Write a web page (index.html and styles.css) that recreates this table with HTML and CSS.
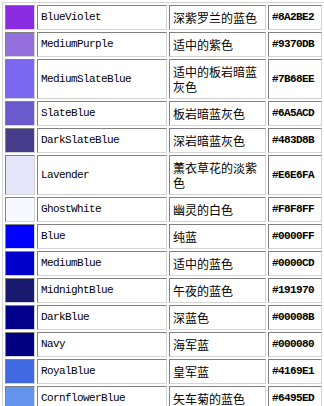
FILE: index.html
```html
<!DOCTYPE html>
<html lang="zh">
<head>
<meta charset="utf-8">
<title>蓝紫色系颜色表</title>
<link rel="stylesheet" href="styles.css">
</head>
<body>
<table class="colors">
  <colgroup>
    <col class="c-swatch"><col class="c-name"><col class="c-cn"><col class="c-hex">
  </colgroup>
  <tr><td class="swatch" style="background:#8A2BE2"></td><td class="name">BlueViolet</td><td class="cn">深紫罗兰的蓝色</td><td class="hex">#8A2BE2</td></tr>
  <tr><td class="swatch" style="background:#9370DB"></td><td class="name">MediumPurple</td><td class="cn">适中的紫色</td><td class="hex">#9370DB</td></tr>
  <tr><td class="swatch" style="background:#7B68EE"></td><td class="name">MediumSlateBlue</td><td class="cn">适中的板岩暗蓝灰色</td><td class="hex">#7B68EE</td></tr>
  <tr><td class="swatch" style="background:#6A5ACD"></td><td class="name">SlateBlue</td><td class="cn">板岩暗蓝灰色</td><td class="hex">#6A5ACD</td></tr>
  <tr><td class="swatch" style="background:#483D8B"></td><td class="name">DarkSlateBlue</td><td class="cn">深岩暗蓝灰色</td><td class="hex">#483D8B</td></tr>
  <tr><td class="swatch" style="background:#E6E6FA"></td><td class="name">Lavender</td><td class="cn">薰衣草花的淡紫色</td><td class="hex">#E6E6FA</td></tr>
  <tr><td class="swatch" style="background:#F8F8FF"></td><td class="name">GhostWhite</td><td class="cn">幽灵的白色</td><td class="hex">#F8F8FF</td></tr>
  <tr><td class="swatch" style="background:#0000FF"></td><td class="name">Blue</td><td class="cn">纯蓝</td><td class="hex">#0000FF</td></tr>
  <tr><td class="swatch" style="background:#0000CD"></td><td class="name">MediumBlue</td><td class="cn">适中的蓝色</td><td class="hex">#0000CD</td></tr>
  <tr><td class="swatch" style="background:#191970"></td><td class="name">MidnightBlue</td><td class="cn">午夜的蓝色</td><td class="hex">#191970</td></tr>
  <tr><td class="swatch" style="background:#00008B"></td><td class="name">DarkBlue</td><td class="cn">深蓝色</td><td class="hex">#00008B</td></tr>
  <tr><td class="swatch" style="background:#000080"></td><td class="name">Navy</td><td class="cn">海军蓝</td><td class="hex">#000080</td></tr>
  <tr><td class="swatch" style="background:#4169E1"></td><td class="name">RoyalBlue</td><td class="cn">皇军蓝</td><td class="hex">#4169E1</td></tr>
  <tr><td class="swatch" style="background:#6495ED"></td><td class="name">CornflowerBlue</td><td class="cn">矢车菊的蓝色</td><td class="hex">#6495ED</td></tr>
</table>
</body>
</html>
```
FILE: styles.css
```css
html {
  overflow: hidden;
  background: #fff;
}

body {
  margin: 0;
  padding: 2px 0 0 2px;
  background: #fff;
  color: #000;
}

/* classic bordered table: raised frame, sunken cells */
.colors {
  table-layout: fixed;
  width: 323px;
  border-collapse: separate;
  border-spacing: 2px;
  border: 1px solid;
  border-color: #d4d4d4 #808080 #808080 #d4d4d4;
}

.c-swatch { width: 30px; }
.c-name   { width: 130px; }
.c-cn     { width: 97px; }
.c-hex    { width: 54px; }

.colors td {
  box-sizing: border-box;
  border: 1px solid;
  border-color: #808080 #d4d4d4 #d4d4d4 #808080;
  padding: 4px 3px;
  line-height: 15px;
  vertical-align: middle;
  color: #000;
}

.name {
  font-family: "Liberation Mono", "DejaVu Sans Mono", monospace;
  font-size: 11px;
  letter-spacing: -0.6px;
}

.cn {
  font-family: "Noto Sans CJK SC", sans-serif;
  font-size: 12px;
}

.hex {
  font-family: "Liberation Mono", "DejaVu Sans Mono", monospace;
  font-size: 11px;
  font-weight: bold;
  letter-spacing: -0.6px;
  padding-left: 4px;
  white-space: nowrap;
}
```
